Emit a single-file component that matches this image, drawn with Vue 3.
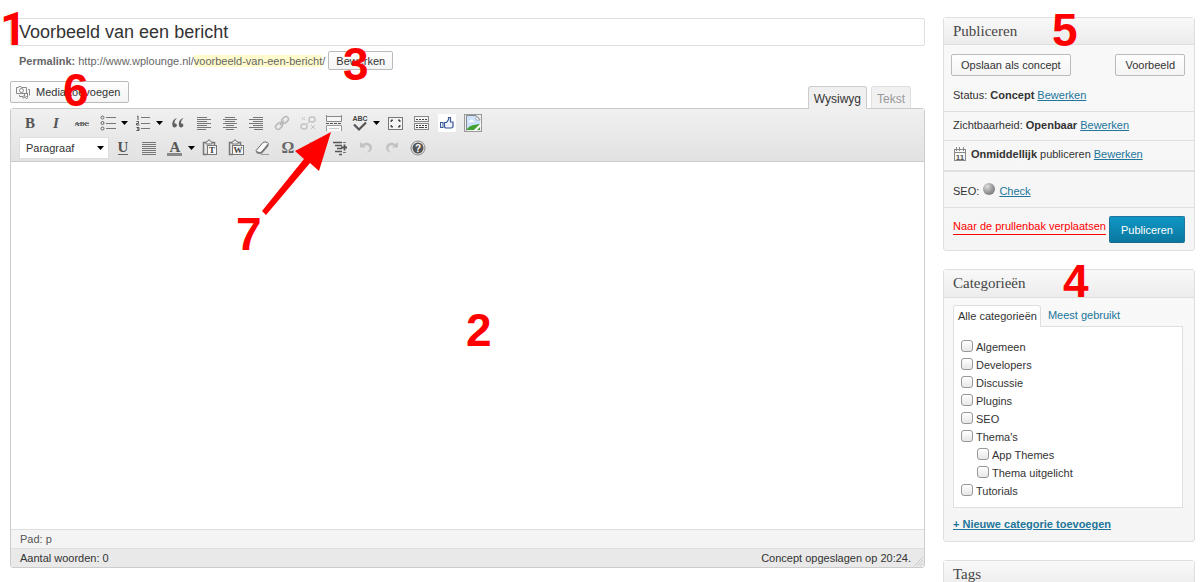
<script setup>
import { ref } from 'vue'

const title = ref('Voorbeeld van een bericht')
const body = ref('')

const rowOne = [
  { id: 'bold', label: 'Vet' },
  { id: 'italic', label: 'Cursief' },
  { id: 'strike', label: 'Doorhalen' },
  { id: 'ul', label: 'Ongeordende lijst', menu: true },
  { id: 'ol', label: 'Geordende lijst', menu: true },
  { id: 'quote', label: 'Citaat' },
  { id: 'left', label: 'Links uitlijnen' },
  { id: 'center', label: 'Centreren' },
  { id: 'right', label: 'Rechts uitlijnen' },
  { id: 'link', label: 'Link invoegen', off: true },
  { id: 'unlink', label: 'Link verwijderen', off: true },
  { id: 'more', label: 'Lees meer invoegen' },
  { id: 'spell', label: 'Spellingcontrole', menu: true },
  { id: 'full', label: 'Volledig scherm' },
  { id: 'sink', label: 'Meer knoppen' },
  { id: 'like', label: 'Vind ik leuk' },
  { id: 'image', label: 'Afbeelding' },
]

const rowTwo = [
  { id: 'underline', label: 'Onderstrepen' },
  { id: 'justify', label: 'Uitvullen' },
  { id: 'color', label: 'Tekstkleur', menu: true },
  { id: 'pasteText', label: 'Plakken als tekst' },
  { id: 'pasteWord', label: 'Plakken uit Word' },
  { id: 'eraser', label: 'Opmaak verwijderen' },
  { id: 'omega', label: 'Speciale tekens' },
  { id: 'outdent', label: 'Inspringen verkleinen', off: true },
  { id: 'indent', label: 'Inspringen vergroten' },
  { id: 'undo', label: 'Ongedaan maken', off: true },
  { id: 'redo', label: 'Opnieuw', off: true },
  { id: 'help', label: 'Help' },
]

const glyphs = {
  bold: '<text x="10" y="15" text-anchor="middle" font-family="Liberation Serif, serif" font-size="15" font-weight="bold" fill="#555">B</text>',
  italic: '<text x="10" y="15" text-anchor="middle" font-family="Liberation Serif, serif" font-size="15" font-weight="bold" font-style="italic" fill="#555">I</text>',
  strike: '<text x="10" y="13" text-anchor="middle" font-family="Liberation Serif, serif" font-size="7" font-weight="bold" fill="#444">ABC</text><path d="M3 10.5h14" stroke="#777"/>',
  ul: '<g fill="none" stroke="#666"><circle cx="4.5" cy="4.500" r="1.500"/><circle cx="4.500" cy="10" r="1.500"/><circle cx="4.500" cy="15.500" r="1.500"/><path d="M8 4.500h10M8 10.500h10M8 15.500h10" stroke="#777"/></g>',
  ol: '<g fill="none" stroke="#555"><path d="M4 3.500l1-.5v4M3.500 8.500h2v2h-2v1.500h3M3.500 14.500h2.500v3H3.500M4 16h2"/><path d="M8 4.500h9M8 10.500h9M8 15.500h9" stroke="#777"/></g>',
  quote: '<path d="M9 5C5.500 6 4.300 8.500 4.300 11.500c0 2 1 3 2.300 3s2.300-1 2.300-2.200-1-2-2.500-2C6.500 8 7.500 6.500 9 5zM15.500 5c-3.500 1-4.700 3.500-4.700 6.500 0 2 1 3 2.300 3s2.300-1 2.300-2.200-1-2-2.500-2c.1-2.300 1.100-3.800 2.600-5.300z" fill="#606060"/>',
  left: '<path d="M3 4.500h10M3 6.500h14M3 8.500h10M3 10.500h14M3 12.500h10M3 14.500h14M3 16.500h9" stroke="#777"/>',
  center: '<path d="M5 4.500h10M3 6.500h14M5 8.500h10M3 10.500h14M6 12.500h8M3 14.500h14M6 16.500h8" stroke="#777"/>',
  right: '<path d="M7 4.500h10M3 6.500h14M7 8.500h10M3 10.500h14M7 12.500h10M3 14.500h14M8 16.500h9" stroke="#777"/>',
  link: '<g fill="none" stroke="#b9b9b9" stroke-width="1.500" transform="rotate(-45 10 10)"><rect x="2" y="7.500" width="7.500" height="5" rx="2.500"/><rect x="10.500" y="7.500" width="7.500" height="5" rx="2.500"/><path d="M7 10h6"/></g>',
  unlink: '<g fill="none" stroke="#c4c4c4" stroke-width="1.500"><rect x="3" y="11" width="6" height="5" rx="2.500"/><rect x="11" y="4" width="6" height="5" rx="2.500"/><path d="M8 12l4-4M4 4l3 3M7 4L4 7M13 12l4 4M17 12l-4 4" stroke-width="1"/></g>',
  more: '<path d="M2.500 3v5.500h15V3z" fill="#f6f6f6"/><path d="M2.500 2v6.500h15V2M3 3.500h14" fill="none" stroke="#888"/><path d="M2 10.500h16" stroke="#555" stroke-dasharray="3 1"/><path d="M2.500 18v-5.500h15V18" fill="#fafafa" stroke="#999"/><path d="M5 15.500h10" stroke="#ccc"/>',
  spell: '<text x="10" y="8" text-anchor="middle" font-family="Liberation Sans, sans-serif" font-size="7" font-weight="bold" fill="#444">ABC</text><path d="M4 11.500l5 5 7-7" fill="none" stroke="#555" stroke-width="2.200"/>',
  full: '<rect x="3.500" y="4.500" width="14" height="12" fill="#f5f5f5" stroke="#777"/><path d="M6 9V7h2zM15 9V7h-2zM6 12v2h2zM15 12v2h-2z" fill="#444" stroke="#555"/>',
  sink: '<rect x="3.500" y="3.500" width="14" height="5" fill="#f5f5f5" stroke="#888"/><rect x="3.500" y="10.500" width="14" height="6" fill="#f5f5f5" stroke="#888"/><path d="M5 6.500h11M5 12.500h11" stroke="#444" stroke-dasharray="2 1"/><path d="M5 14.500h2m1 0h5m1 0h2" stroke="#444"/>',
  like: '<rect x="1" y="1" width="18" height="18" fill="#fff"/><rect x="3.500" y="9.500" width="2.500" height="5" fill="#eef3fb" stroke="#3b5998"/><path d="M7.500 9.500h2l2-3V4.500h2v4.500h2.500v5l-1.500 1H8.500l-1-1z" fill="#eef3fb" stroke="#3b5998" stroke-width="1.200"/>',
  image: '<rect x="1.500" y="1.500" width="17" height="17" fill="#eee" stroke="#999"/><path d="M4 3h9l4 4v10H4z" fill="#cde2ff"/><path d="M13 3v4h4z" fill="#fff" stroke="#999" stroke-width=".7"/><path d="M5 9c1-2 2-1 3-2s3 0 3 2z" fill="#fff"/><path d="M4 17v-1c3-4 6-4 13-5v6z" fill="#43a032"/><path d="M10 18l8-8v3l-5 5z" fill="#fff"/><path d="M3.500 17.500v-15H13l4 4" fill="none" stroke="#888"/>',
  underline: '<text x="10" y="14" text-anchor="middle" font-family="Liberation Serif, serif" font-size="15" font-weight="bold" fill="#555">U</text><path d="M5 16.500h10" stroke="#666"/>',
  justify: '<path d="M3 4.500h14M3 6.500h14M3 8.500h14M3 10.500h14M3 12.500h14M3 14.500h14M3 16.500h14" stroke="#777"/>',
  color: '<text x="10" y="14" text-anchor="middle" font-family="Liberation Serif, serif" font-size="15" font-weight="bold" fill="#555">A</text><path d="M2 15h15v3H2z" fill="#888"/>',
  pasteText: '<path d="M7 16.500H3.500V4.500H6M12 4.500h2.500V7" fill="none" stroke="#777" stroke-width="1.500"/><path d="M6 6V4l2-1 1-1.500L10 3l2 1v2z" fill="#eee" stroke="#777"/><rect x="7.500" y="7.500" width="9" height="9" fill="#f8f8f8" stroke="#777"/><text x="12" y="15" text-anchor="middle" font-family="Liberation Serif, serif" font-size="9" font-weight="bold" fill="#444">T</text>',
  pasteWord: '<path d="M7 16.500H3.500V4.500H6M12 4.500h2.500V7" fill="none" stroke="#777" stroke-width="1.500"/><path d="M6 6V4l2-1 1-1.500L10 3l2 1v2z" fill="#eee" stroke="#777"/><rect x="6.500" y="7.500" width="11" height="9" fill="#f8f8f8" stroke="#777"/><text x="12" y="15" text-anchor="middle" font-family="Liberation Serif, serif" font-size="9" font-weight="bold" fill="#444">W</text>',
  eraser: '<path d="M4 12.500l7-8c1-1 4.500-.5 5.500 1L9.500 14c-1 1-5 .5-5.500-1.500z" fill="#fafafa" stroke="#666"/><path d="M4 12.500c.5 2 4.500 2.500 5.500 1.500l7-8.500V8L10 15.500c-2 1-5.500.5-6-1.500z" fill="#777"/><path d="M9 16.500h8" stroke="#999"/>',
  omega: '<text x="10" y="15" text-anchor="middle" font-family="Liberation Serif, serif" font-size="16" font-weight="bold" fill="#666">Ω</text>',
  outdent: '<path d="M5 4.500h12M9 7.500h8M9 10.500h8" stroke="#ccc"/>',
  indent: '<path d="M3 4.500h9M5 7.500h7M7 10.500h5M5 13.500h7M9 16.500h3" stroke="#555" stroke-width="1.500"/><path d="M13 4.500h3M13 14.500h3" stroke="#777"/><path d="M11 9.500h6M14.500 6.500v6" stroke="#555" stroke-width="1.800"/>',
  undo: '<path d="M4 4v5.500h6L8 7.700c3-1.500 6 .5 5.500 3-.3 1.800-1.500 3-3 4 3.500-.5 5.500-2.500 5.500-5.200C16 5.500 10.500 3 6.500 6z" fill="#c2c2c2"/>',
  redo: '<path d="M16 4v5.500h-6l2-1.800c-3-1.500-6 .5-5.500 3 .3 1.800 1.500 3 3 4C6 14.200 4 12.200 4 9.500 4 5.500 9.500 3 13.500 6z" fill="#c2c2c2"/>',
  help: '<circle cx="10" cy="10" r="7" fill="#e8e8e8" stroke="#888"/><circle cx="10" cy="10" r="5.500" fill="#555"/><text x="10" y="14" text-anchor="middle" font-family="Liberation Sans, sans-serif" font-size="10" font-weight="bold" fill="#fff">?</text>',
}

const categories = ref([
  { name: 'Algemeen', on: false },
  { name: 'Developers', on: false },
  { name: 'Discussie', on: false },
  { name: 'Plugins', on: false },
  { name: 'SEO', on: false },
  { name: "Thema's", on: false },
  { name: 'App Themes', on: false, child: true },
  { name: 'Thema uitgelicht', on: false, child: true },
  { name: 'Tutorials', on: false },
])
</script>

<template>
  <div class="page">
    <main class="main">
      <input v-model="title" class="title" type="text" aria-label="Titel" />

      <div class="permalink">
        <strong>Permalink:</strong>
        <span>http://www.wplounge.nl/<mark>voorbeeld-van-een-bericht</mark>/</span>
        <button class="btn small" type="button">Bewerken</button>
      </div>

      <div class="tools">
        <button class="btn media" type="button">
          <svg width="14" height="14" viewBox="0 0 14 14" fill="none" stroke="#888">
            <path d="M.500 2.500h2l.500-1h2l.500 1h5v6H.500z" />
            <circle cx="5.500" cy="5.500" r="2" />
            <path d="M12 4.500h1.500v6M3.500 10v1.500H7" />
            <path d="M8.500 11V9l3-1v4" />
            <circle cx="7.500" cy="12" r="1" />
            <circle cx="10.500" cy="12.500" r="1" />
          </svg>
          Media toevoegen
        </button>
        <div class="tabs">
          <button class="tab active" type="button">Wysiwyg</button>
          <button class="tab" type="button">Tekst</button>
        </div>
      </div>

      <section class="editor">
        <div class="toolbar">
          <div class="row">
            <template v-for="b in rowOne" :key="b.id">
              <button class="icon" type="button" :aria-label="b.label" :disabled="b.off">
                <svg width="20" height="20" viewBox="0 0 20 20" fill="none" v-html="glyphs[b.id]"></svg>
              </button>
              <button v-if="b.menu" class="caret" type="button" :aria-label="b.label + ' menu'">
                <svg width="7" height="4" viewBox="0 0 7 4"><path d="M0 0h7L3.500 4z" /></svg>
              </button>
            </template>
          </div>
          <div class="row">
            <div class="format">
              <select aria-label="Opmaak">
                <option>Paragraaf</option>
              </select>
              <svg width="7" height="4" viewBox="0 0 7 4"><path d="M0 0h7L3.500 4z" /></svg>
            </div>
            <template v-for="b in rowTwo" :key="b.id">
              <button class="icon" type="button" :aria-label="b.label" :disabled="b.off">
                <svg width="20" height="20" viewBox="0 0 20 20" fill="none" v-html="glyphs[b.id]"></svg>
              </button>
              <button v-if="b.menu" class="caret" type="button" :aria-label="b.label + ' menu'">
                <svg width="7" height="4" viewBox="0 0 7 4"><path d="M0 0h7L3.500 4z" /></svg>
              </button>
            </template>
          </div>
        </div>
        <textarea v-model="body" class="canvas" aria-label="Bericht"></textarea>
        <div class="path">Pad: p</div>
        <div class="status">
          <span>Aantal woorden: 0</span>
          <span>Concept opgeslagen op 20:24.</span>
          <svg class="grip" width="10" height="10" viewBox="0 0 10 10" stroke="#ccc">
            <path d="M1 10l9-9M4 10l6-6M7 10l3-3" />
          </svg>
        </div>
      </section>

      <span class="note n1">1</span>
      <span class="note n2">2</span>
      <span class="note n3">3</span>
      <span class="note n6">6</span>
      <span class="note n7">7</span>
      <svg class="arrow" width="72" height="84" viewBox="0 0 72 84">
        <path d="M71 0L35 19l9 8L2 79l4 4 44-52 9 8z" fill="#f00" />
      </svg>
    </main>

    <aside class="side">
      <section class="box">
        <h3>Publiceren</h3>
        <span class="note n5">5</span>
        <div class="actions">
          <button class="btn" type="button">Opslaan als concept</button>
          <button class="btn" type="button">Voorbeeld</button>
        </div>
        <p class="item first">Status: <b>Concept</b> <a href="#">Bewerken</a></p>
        <p class="item">Zichtbaarheid: <b>Openbaar</b> <a href="#">Bewerken</a></p>
        <p class="item date">
          <svg class="cal" width="14" height="14" viewBox="0 0 14 14">
            <rect x="1.500" y="2.500" width="11" height="11" fill="#f8f8f8" stroke="#888" />
            <path d="M1 5.500h12M3.500 0v4M6.500 0v4M10.500 0v4" stroke="#888" />
            <text x="7" y="13" text-anchor="middle" font-family="Liberation Sans, sans-serif" font-size="8" font-weight="bold" fill="#555">11</text>
          </svg>
          <b>Onmiddellijk</b> publiceren <a href="#">Bewerken</a>
        </p>
        <p class="item seo">SEO: <i class="ball"></i> <a href="#">Check</a></p>
        <div class="submit">
          <a class="trash" href="#">Naar de prullenbak verplaatsen</a>
          <button class="primary" type="button">Publiceren</button>
        </div>
      </section>

      <section class="box">
        <h3 class="tall">Categorieën</h3>
        <span class="note n4">4</span>
        <div class="cats">
          <div class="cat-tabs">
            <button class="cat-tab on" type="button">Alle categorieën</button>
            <button class="cat-tab" type="button">Meest gebruikt</button>
          </div>
          <ul class="list">
            <li v-for="c in categories" :key="c.name" :class="{ child: c.child }">
              <label><input v-model="c.on" type="checkbox" />{{ c.name }}</label>
            </li>
          </ul>
          <a class="add" href="#">+ Nieuwe categorie toevoegen</a>
        </div>
      </section>

      <section class="box">
        <h3 class="tall">Tags</h3>
      </section>
    </aside>
  </div>
</template>

<style>
body {
  margin: 0;
  background: #fff;
}
</style>

<style scoped>
.page {
  display: flex;
  gap: 18px;
  box-sizing: border-box;
  height: 100vh;
  padding: 17px 6px 0 10px;
  overflow: hidden;
  font: 11px/18px "Liberation Sans", Arial, sans-serif;
  color: #333;
}
button,
input,
select,
textarea {
  box-sizing: border-box;
  margin: 0;
  font: inherit;
  color: inherit;
}
.main {
  position: relative;
  flex: 1;
  min-width: 0;
  padding-top: 1px;
}
.title {
  display: block;
  width: 100%;
  height: 28px;
  padding: 0 8px;
  border: 1px solid #dfdfdf;
  border-radius: 2px;
  background: #fff;
  font-size: 18px;
}
.permalink {
  display: flex;
  align-items: center;
  gap: 3px;
  margin-top: 5px;
  padding-left: 9px;
  color: #666;
}
mark {
  background: #fffbcc;
  color: inherit;
}
.btn {
  height: 22px;
  padding: 0 9px;
  border: 1px solid #bbb;
  border-radius: 2px;
  background: linear-gradient(#fefefe, #f4f4f4);
  line-height: 18px;
  color: #333;
}
.btn.small {
  height: 19px;
  padding: 0 7px;
  line-height: 16px;
}
.tools {
  display: flex;
  justify-content: space-between;
  align-items: flex-start;
  height: 27px;
  margin-top: 11px;
}
.media {
  display: flex;
  align-items: center;
  gap: 6px;
  padding: 0 8px 0 5px;
}
.tabs {
  display: flex;
  align-self: flex-end;
  align-items: flex-end;
  gap: 4px;
  margin-right: 14px;
}
.tab {
  height: 22px;
  padding: 2px 5px 0;
  border: 1px solid #dfdfdf;
  border-bottom: 0;
  border-radius: 3px 3px 0 0;
  background: #f1f1f1;
  font-size: 12px;
  color: #999;
}
.tab.active {
  z-index: 1;
  height: 23px;
  margin-bottom: -1px;
  border-color: #ccc;
  background: #f0f0f0;
  color: #333;
}
.editor {
  border: 1px solid #ccc;
  border-radius: 3px;
}
.toolbar {
  padding: 2px 6px 1px;
  border-bottom: 1px solid #ccc;
  background: linear-gradient(#f0f0f0, #e2e2e2);
}
.row {
  display: flex;
  align-items: center;
  height: 24px;
}
.row + .row {
  height: 25px;
}
.icon,
.caret {
  display: flex;
  justify-content: center;
  align-items: center;
  width: 26px;
  height: 24px;
  padding: 0;
  border: 0;
  background: none;
}
.caret {
  justify-content: flex-start;
  width: 9px;
}
.format {
  position: relative;
  width: 91px;
  padding-left: 2px;
}
.format select {
  display: block;
  width: 90px;
  height: 22px;
  padding: 0 6px;
  border: 1px solid #ddd;
  border-radius: 0;
  background: #fff;
  appearance: none;
}
.format svg {
  position: absolute;
  top: 9px;
  right: 6px;
}
.canvas {
  display: block;
  width: 100%;
  height: 367px;
  padding: 8px;
  border: 0;
  outline: 0;
  resize: none;
  background: #fff;
}
.path,
.status {
  padding: 0 9px;
  border-top: 1px solid #dfdfdf;
  background: #f4f4f4;
  color: #555;
}
.status {
  position: relative;
  display: flex;
  justify-content: space-between;
  padding-right: 13px;
  background: #e9e9e9;
  color: #333;
}
.grip {
  position: absolute;
  right: 1px;
  bottom: 1px;
}
.side {
  flex: 0 0 252px;
}
.box {
  position: relative;
  box-sizing: border-box;
  margin-bottom: 18px;
  border: 1px solid #dfdfdf;
  border-radius: 3px;
  background: linear-gradient(#f9f9f9, #f5f5f5);
}
h3 {
  margin: 0;
  padding: 0 9px;
  border-bottom: 1px solid #dfdfdf;
  background: linear-gradient(#f9f9f9, #ececec);
  font: 15px/26px Georgia, "Liberation Serif", serif;
  color: #464646;
}
h3.tall {
  line-height: 27px;
}
.actions {
  display: flex;
  justify-content: space-between;
  padding: 9px 9px 0 7px;
}
.item {
  margin: 0;
  padding: 4px 9px 6px;
  border-bottom: 1px solid #dfdfdf;
}
.item.first {
  padding: 10px 9px 7px;
}
.item.date {
  display: flex;
  align-items: center;
  gap: 3px;
  padding-bottom: 7px;
}
a {
  color: #21759b;
}
.cal {
  margin-right: 1px;
}
.item.seo {
  padding: 10px 9px 7px;
  border-top: 1px solid #dfdfdf;
}
.ball {
  display: inline-block;
  width: 12px;
  height: 12px;
  margin: 0 1px;
  border-radius: 50%;
  background: radial-gradient(circle at 35% 30%, #ddd, #999 50%, #666);
}
.submit {
  display: flex;
  justify-content: space-between;
  align-items: flex-start;
  padding: 8px 9px 7px;
}
.trash {
  margin-top: 4px;
  padding-bottom: 1px;
  border-bottom: 1px solid #f00;
  line-height: 13px;
  text-decoration: none;
  color: #f00;
}
.primary {
  height: 27px;
  padding: 0 11px;
  border: 1px solid #21759b;
  border-bottom-color: #1e6a8d;
  border-radius: 2px;
  background: linear-gradient(#0f96c4, #0a78a0);
  color: #fff;
}
.cats {
  padding: 7px 11px 8px 9px;
}
.cat-tabs {
  display: flex;
}
.cat-tab {
  height: 21px;
  padding: 0 7px 2px;
  border: 0;
  background: none;
  color: #21759b;
}
.cat-tab.on {
  z-index: 1;
  height: 22px;
  margin-bottom: -1px;
  padding: 0 3px 2px 4px;
  border: 1px solid #dfdfdf;
  border-bottom: 0;
  border-radius: 3px 3px 0 0;
  background: #fff;
  color: #333;
}
.list {
  margin: 0 0 7px;
  padding: 11px 7px 7px;
  border: 1px solid #dfdfdf;
  background: #fff;
  list-style: none;
}
.list label {
  display: flex;
  gap: 3px;
}
.list .child {
  padding-left: 16px;
}
.list input {
  width: 12px;
  height: 12px;
  margin-top: 2px;
  border: 1px solid #999;
  border-radius: 3px;
  background: linear-gradient(#fff, #e6e6e6);
  appearance: none;
}
.list input:checked {
  background: #21759b;
}
.add {
  font-weight: bold;
}
.note {
  position: absolute;
  z-index: 2;
  font-size: 46px;
  font-weight: bold;
  line-height: 46px;
  color: #f00;
  pointer-events: none;
}
.n1 {
  top: -11px;
  left: -10px;
  font-family: Roboto, "Liberation Sans", sans-serif;
}
.n2 {
  top: 290px;
  left: 456px;
}
.n3 {
  top: 24px;
  left: 333px;
}
.n6 {
  top: 50px;
  left: 53px;
}
.n7 {
  top: 194px;
  left: 226px;
}
.n5 {
  top: -11px;
  left: 108px;
}
.n4 {
  top: -12px;
  left: 119px;
}
.arrow {
  position: absolute;
  z-index: 2;
  top: 115px;
  left: 250px;
  pointer-events: none;
}
</style>
